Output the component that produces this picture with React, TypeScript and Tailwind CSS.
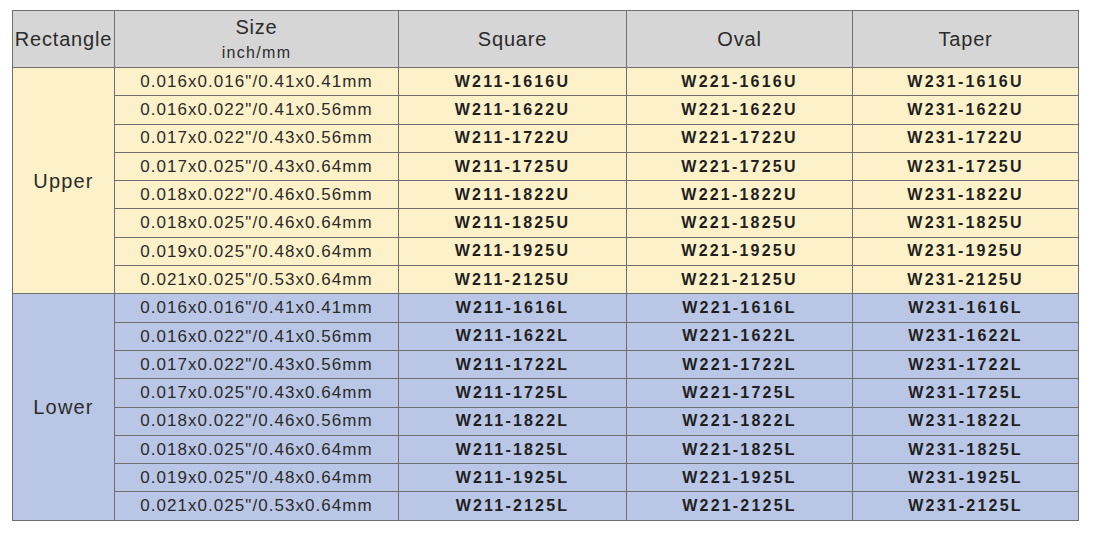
const sizes = [
  { inch: '0.016x0.016"', mm: "0.41x0.41mm", code: "1616" },
  { inch: '0.016x0.022"', mm: "0.41x0.56mm", code: "1622" },
  { inch: '0.017x0.022"', mm: "0.43x0.56mm", code: "1722" },
  { inch: '0.017x0.025"', mm: "0.43x0.64mm", code: "1725" },
  { inch: '0.018x0.022"', mm: "0.46x0.56mm", code: "1822" },
  { inch: '0.018x0.025"', mm: "0.46x0.64mm", code: "1825" },
  { inch: '0.019x0.025"', mm: "0.48x0.64mm", code: "1925" },
  { inch: '0.021x0.025"', mm: "0.53x0.64mm", code: "2125" },
];

const groups = [
  { name: "Upper", suffix: "U", bg: "bg-[#fdf1c9]", start: 2 },
  { name: "Lower", suffix: "L", bg: "bg-[#b9c6e5]", start: 10 },
];

const headCell =
  "bg-[#d6d6d6] flex items-center justify-center text-[20px] tracking-[0.8px] text-[#2b2b2b]";

export default function App() {
  return (
    <div className="w-[1095px] h-[535px] bg-white pt-[10px] pl-[12px] font-['Liberation_Sans',Arial,sans-serif]">
      <div className="grid w-[1067px] grid-cols-[101px_283px_227px_225px_225px] grid-rows-[56px_repeat(16,27.3px)] gap-px border border-[#6f6f6f] bg-[#6f6f6f]">
        {/* header */}
        <div className={headCell}>Rectangle</div>
        <div className="bg-[#d6d6d6] flex flex-col items-center justify-center text-[#2b2b2b] leading-tight gap-[3px]">
          <span className="text-[20px] tracking-[0.8px]">Size</span>
          <span className="text-[16px] tracking-[1.3px]">inch/mm</span>
        </div>
        <div className={headCell}>Square</div>
        <div className={headCell}>Oval</div>
        <div className={headCell}>Taper</div>

        {groups.map((g) => (
          <GroupRows key={g.name} group={g} />
        ))}
      </div>
    </div>
  );
}

function GroupRows({
  group,
}: {
  group: { name: string; suffix: string; bg: string; start: number };
}) {
  return (
    <>
      <div
        className={`${group.bg} col-start-1 row-span-8 flex items-center justify-center text-[20px] tracking-[1.2px] text-[#2b2b2b]`}
        style={{ gridRowStart: group.start }}
      >
        {group.name}
      </div>
      {sizes.map((s, i) => (
        <Row key={s.code} s={s} group={group} row={group.start + i} />
      ))}
    </>
  );
}

function Row({
  s,
  group,
  row,
}: {
  s: { inch: string; mm: string; code: string };
  group: { suffix: string; bg: string };
  row: number;
}) {
  const code = "flex items-center justify-center text-[16px] font-bold tracking-[2.2px] text-[#1f1f1f]";
  return (
    <>
      <div
        className={`${group.bg} col-start-2 flex items-center justify-center text-[17px] tracking-[1.05px] text-[#2b2b2b]`}
        style={{ gridRowStart: row }}
      >
        {s.inch}/{s.mm}
      </div>
      <div className={`${group.bg} ${code}`} style={{ gridRowStart: row }}>
        W211-{s.code}
        {group.suffix}
      </div>
      <div className={`${group.bg} ${code}`} style={{ gridRowStart: row }}>
        W221-{s.code}
        {group.suffix}
      </div>
      <div className={`${group.bg} ${code}`} style={{ gridRowStart: row }}>
        W231-{s.code}
        {group.suffix}
      </div>
    </>
  );
}
